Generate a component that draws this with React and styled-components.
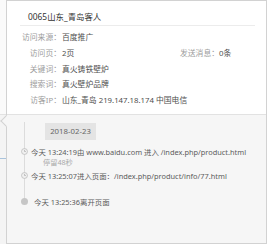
import React from 'react'
import styled, { createGlobalStyle } from 'styled-components'

const GlobalStyle = createGlobalStyle`
  html, body {
    margin: 0;
    padding: 0;
    background: #ffffff;
  }
  body {
    font-family: "Noto Sans", "Noto Sans CJK SC", sans-serif;
  }
`;

const Page = styled.div`
  display: flex;
  width: 268px;
  height: 244px;
  overflow: hidden;
`;

const LeftStrip = styled.div`
  width: 6px;
  height: 244px;
  display: flex;
  flex-direction: column;
  background: #f4f4f4;
`;

const StripTop = styled.div`
  height: 114px;
  background: #fafafa;
  border-bottom: 1px solid #e2e2e2;
`;

const StripMark = styled.div`
  margin-top: 43px;
  height: 1px;
  background: #a9c3dc;
`;

const Panel = styled.div`
  position: relative;
  width: 259px;
  height: 242px;
  border: 1px solid #d2d2d2;
  display: flex;
  flex-direction: column;
  background: #ffffff;
`;

const Arrow = styled.div`
  position: absolute;
  left: -5px;
  top: 116px;
  width: 7px;
  height: 7px;
  background: #f6f6f6;
  border-left: 1px solid #d2d2d2;
  border-bottom: 1px solid #d2d2d2;
  transform: rotate(45deg);
`;

const Header = styled.div`
  height: 113px;
  border-bottom: 1px solid #e2e2e2;
`;

const Title = styled.div`
  margin: 0 11px 0 13px;
  height: 24px;
  padding-left: 8px;
  border-bottom: 1px solid #ececec;
  font-size: 8.4px;
  line-height: 32px;
  color: #333;
`;

const InfoGrid = styled.div`
  display: grid;
  grid-template-columns: 54px 119px 38px 1fr;
  grid-auto-rows: 15.7px;
  margin-top: 3px;
  font-size: 7.8px;
  align-items: center;
`;

const Label = styled.div`
  color: #9c9c9c;
  text-align: ${p => (p.$left ? 'left' : 'right')};
  white-space: nowrap;
`;

const Value = styled.div`
  color: #505050;
  padding-left: 1px;
  white-space: nowrap;
  grid-column: ${p => (p.$wide ? 'span 3' : 'auto')};
`;

const Body = styled.div`
  flex: 1;
  background: #f6f6f6;
`;

const Timeline = styled.div`
  position: relative;
  padding: 8px 0 0 13px;
  &::before {
    content: '';
    position: absolute;
    left: 16.5px;
    top: 7px;
    width: 1px;
    height: 80px;
    background: #dcdcdc;
  }
`;

const DateBadge = styled.div`
  margin-left: 25px;
  width: 51px;
  height: 17px;
  background: #e4e4e4;
  color: #666;
  font-size: 7.8px;
  line-height: 17px;
  text-align: center;
`;

const Item = styled.div`
  position: relative;
  display: flex;
  align-items: center;
  margin-top: ${p => p.$gap}px;
  height: 11px;
  font-size: 7.4px;
  color: #5c5c5c;
  white-space: nowrap;
`;

const Marker = styled.div`
  width: 8px;
  height: 8px;
  display: flex;
  align-items: center;
  justify-content: center;
  margin-right: ${p => p.$space}px;
  flex-shrink: 0;
`;

const Dot = styled.div`
  width: 7px;
  height: 7px;
  border-radius: 50%;
  background: #c6c6c6;
`;

const Stay = styled.div`
  margin-left: 23px;
  height: 12px;
  line-height: 11px;
  font-size: 7.2px;
  color: #aaa;
`;

const Clock = () => (
  <svg width="7" height="7" viewBox="0 0 8 8">
    <circle cx="4" cy="4" r="3.4" fill="#f0f0f0" stroke="#bdbdbd" strokeWidth="0.9" />
    <path d="M4 2.2V4h1.6" fill="none" stroke="#aaa" strokeWidth="0.8" />
  </svg>
);

const info = [
  ['访问来源：', '百度推广'],
  ['访问页：', '2页', '发送消息：', '0条'],
  ['关键词：', '真火铸铁壁炉'],
  ['搜索词：', '真火壁炉品牌'],
];

const App = () => {
  return (
    <>
      <GlobalStyle />
      <Page>
        <LeftStrip>
          <StripTop />
          <StripMark />
        </LeftStrip>
        <Panel>
          <Arrow />
          <Header>
            <Title>0065山东_青岛客人</Title>
            <InfoGrid>
              {info.map(([l, v, l2, v2]) => (
                <React.Fragment key={l}>
                  <Label>{l}</Label>
                  <Value $wide={!l2}>{v}</Value>
                  {l2 && <Label $left>{l2}</Label>}
                  {l2 && <Value>{v2}</Value>}
                </React.Fragment>
              ))}
              <Label>访客IP：</Label>
              <Value $wide>山东_青岛 219.147.18.174 中国电信</Value>
            </InfoGrid>
          </Header>
          <Body>
            <Timeline>
              <DateBadge>2018-02-23</DateBadge>
              <Item $gap={6}>
                <Marker $space={3}><Clock /></Marker>
                今天 13:24:19由 www.baidu.com 进入 /index.php/product.html
              </Item>
              <Stay>停留48秒</Stay>
              <Item $gap={1}>
                <Marker $space={3}><Clock /></Marker>
                今天 13:25:07进入页面：/index.php/product/info/77.html
              </Item>
              <Item $gap={15}>
                <Marker $space={6}><Dot /></Marker>
                今天 13:25:36离开页面
              </Item>
            </Timeline>
          </Body>
        </Panel>
      </Page>
    </>
  )
}

export default App
